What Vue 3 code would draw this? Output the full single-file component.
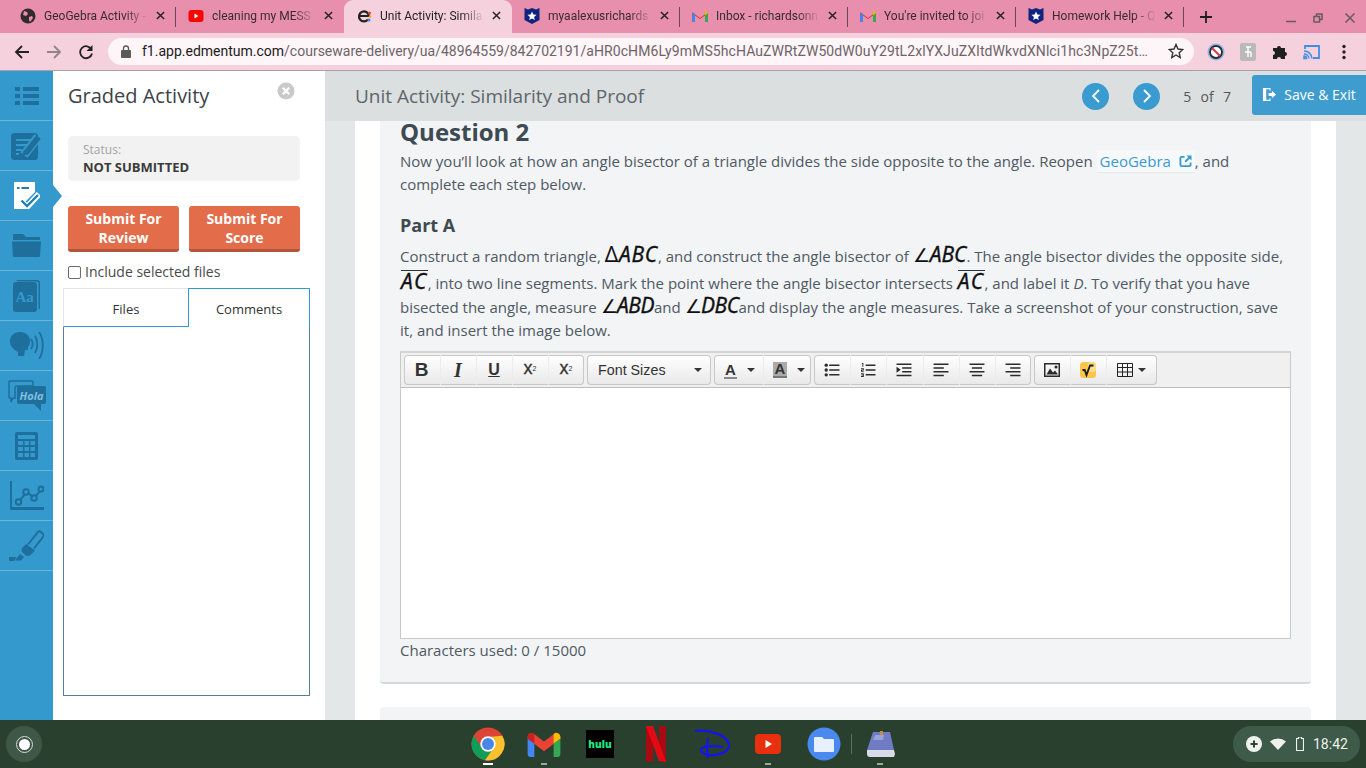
<template>
  <div class="screen">
    <!-- browser chrome -->
    <div class="tabstrip">
      <div
        v-for="tab in tabs"
        :key="tab.title"
        :class="['tab', { active: tab.active }]"
      >
        <svg class="fav" viewBox="0 0 16 16">
          <template v-if="tab.icon === 'globe'">
            <circle cx="8" cy="8" r="7.5" fill="#33292e" />
            <path d="M4 3l3 1 1 2-2 2-3-1zM9 9l3-1 1 2-3 4-1-2z" fill="#e78fac" />
          </template>
          <template v-else-if="tab.icon === 'yt'">
            <rect x="0.5" y="2" width="15" height="12" rx="3" fill="#f00" />
            <path d="M6.5 5.5l4 2.5-4 2.5z" fill="#fff" />
          </template>
          <template v-else-if="tab.icon === 'ed'">
            <path d="M12 11.500A5 5 0 1 1 13 8H4" fill="none" stroke="#222" stroke-width="2.200" />
            <circle cx="13.500" cy="5" r="1.500" fill="#e0483a" />
            <circle cx="14" cy="8.500" r="1.300" fill="#f0a020" />
            <circle cx="13" cy="12" r="1.500" fill="#3a8ae0" />
          </template>
          <template v-else-if="tab.icon === 'shield'">
            <path d="M0.500 0l3.500 1.500L8 0l4 1.500L15.500 0v12L8 16 .5 12z" fill="#12237e" />
            <path d="M8 3.500l1.300 3 3.200.3-2.400 2.100.7 3.100L8 10.400l-2.800 1.600.7-3.100-2.400-2.100 3.200-.3z" fill="#fff" />
          </template>
          <template v-else>
            <path d="M0 14V4l8 6 8-6v10h-3V7.500L8 11 3 7.500V14z" fill="#d93a2e" />
            <path d="M0 4.500l3 2.500v7H1a1 1 0 0 1-1-1z" fill="#4285f4" />
            <path d="M16 4.500L13 7v7h2a1 1 0 0 0 1-1z" fill="#34a853" />
            <path d="M13 3l3 1v1l-3 2.500z" fill="#f4b400" />
          </template>
        </svg>
        <span class="tab-title">{{ tab.title }}</span>
        <svg class="tab-x" viewBox="0 0 10 10"><path d="M1 1l8 8M9 1l-8 8" /></svg>
      </div>
      <svg class="newtab" viewBox="0 0 12 12"><path d="M6 0v12M0 6h12" /></svg>
      <div class="winctl">
        <svg viewBox="0 0 10 10"><path d="M0 8.500h10" /></svg>
        <svg viewBox="0 0 10 10"><path d="M1 3.500h5.500V9H1zM3.500 3.500V1H9v5.500H6.500" /></svg>
        <svg viewBox="0 0 10 10"><path d="M0.500 0.500l9 9M9.500 0.500l-9 9" /></svg>
      </div>
    </div>
    <div class="toolbar">
      <svg class="nav-ic" viewBox="0 0 16 16"><path d="M15 8H2M8 2L2 8l6 6" stroke="#222" /></svg>
      <svg class="nav-ic" viewBox="0 0 16 16"><path d="M1 8h13M8 2l6 6-6 6" stroke="#8f8589" /></svg>
      <svg class="nav-ic" viewBox="0 0 16 16"><path d="M13.500 5.500A6 6 0 1 0 14 9.500" stroke="#222" /><path d="M14.500 1v6h-6z" fill="#222" /></svg>
      <div class="omnibox">
        <svg class="lock" viewBox="0 0 10 13"><path d="M2.500 5V3.500a2.500 2.500 0 0 1 5 0V5" fill="none" stroke="#5a5a5a" stroke-width="1.300" /><rect y="5" width="10" height="8" rx="1" fill="#5a5a5a" /></svg>
        <span class="url"><b>f1.app.edmentum.com</b>/courseware-delivery/ua/48964559/842702191/<span class="b64">aHR0cHM6Ly9mMS5hcHAuZWRtZW50dW0uY29tL2xlYXJuZXItdWkvdXNlci1hc3NpZ25t…</span></span>
        <svg class="star" viewBox="0 0 16 16"><path d="M8 1.500l2 4.500 4.800.5-3.600 3.200 1 4.800L8 12l-4.200 2.500 1-4.800L1.200 6.500 6 6z" /></svg>
      </div>
      <div class="ext-row">
        <svg viewBox="0 0 18 18"><circle cx="9" cy="9" r="8.500" fill="#8ab8e8" /><circle cx="9" cy="9" r="6" fill="#fff" stroke="#2b2b2b" stroke-width="1.800" /><path d="M5 5l8 8" stroke="#d9384a" stroke-width="2" /></svg>
        <svg viewBox="0 0 18 18"><rect x="1" width="16" height="18" rx="2" fill="#b9b9b9" /><path d="M7 4h5M9 4v10M6 9h6M12 9v5" stroke="#fff" stroke-width="1.400" fill="none" /></svg>
        <svg viewBox="0 0 18 18"><path d="M2 5h4a2 2 0 1 1 4 0h4v4a2 2 0 1 1 0 4v3h-4a2 2 0 1 0-4 0H2v-4a2 2 0 1 0 0-4z" fill="#1f1f1f" /></svg>
        <svg viewBox="0 0 18 18"><path d="M2 6V3h14v12h-6" fill="none" stroke="#3f8fe8" stroke-width="1.800" /><path d="M1 15.500h2.500A2.500 2.500 0 0 0 1 13zM1 11a5 5 0 0 1 5 4.500M1 8a8 8 0 0 1 8 7.500" fill="none" stroke="#3f8fe8" stroke-width="1.500" /></svg>
        <svg viewBox="0 0 18 18"><circle cx="9" cy="3.500" r="1.700" fill="#222" /><circle cx="9" cy="9" r="1.700" fill="#222" /><circle cx="9" cy="14.500" r="1.700" fill="#222" /></svg>
      </div>
    </div>

    <!-- app -->
    <div class="app">
      <nav class="rail">
        <div v-for="(item, i) in railItems" :key="item" :class="['rail-item', { current: i === 2 }]">
          <svg v-if="item === 'list'" viewBox="0 0 24 18" class="ri list"><path d="M0 0h5v4H0zM8 0h16v4H8zM0 7h5v4H0zM8 7h16v4H8zM0 14h5v4H0zM8 14h16v4H8z" /></svg>
          <svg v-else-if="item === 'note'" viewBox="0 0 31 28" class="ri note">
            <rect y="1" width="27" height="27" rx="3.500" />
            <path d="M5 8h15M5 13h11M5 18h6M5 22h3" fill="none" stroke="#3499cd" stroke-width="2" />
            <path d="M13 23L27 5" fill="none" stroke="#3499cd" stroke-width="9" />
            <path d="M14.500 21.500L27.500 5" fill="none" stroke="#1f6f9c" stroke-width="5.500" />
            <path d="M11 24l1.500-5 4 3z" />
          </svg>
          <svg v-else-if="item === 'check'" viewBox="0 0 26 27" class="ri check"><path d="M0 0h21v10L10 21l4 6H0z" fill="#fff" /><path d="M7 19l6 6L25 12" fill="none" stroke="#fff" stroke-width="6" /><path d="M7.500 18.500l5.500 5.500 11-11" fill="none" stroke="#1f7fb5" stroke-width="2.400" /><path d="M3 5h2.500v2H3zM7.500 5H15v2H7.500z" fill="#1f7fb5" /></svg>
          <svg v-else-if="item === 'folder'" viewBox="0 0 29 23" class="ri folder"><path d="M1 1a1 1 0 0 1 1-1h9l3 3h13a1 1 0 0 1 1 1v2H1zM0 7.500h29L28 22a1 1 0 0 1-1 1H2a1 1 0 0 1-1-1z" /></svg>
          <svg v-else-if="item === 'dict'" viewBox="0 0 27 32" class="ri dict"><path d="M3 0h21a3 3 0 0 1 3 3v26h-1.500V3A1.500 1.500 0 0 0 24 1.500H5z" /><rect y="2" width="24" height="30" rx="3" /><text x="2.500" y="22" class="aa">Aa</text></svg>
          <svg v-else-if="item === 'speak'" viewBox="0 0 34 27" class="ri speak"><path d="M10 0c6 0 10 4 10 9 0 3-1 5-2 6v3h-3l-1 6H8v-4C4 18 0 14 0 9 0 4 4 0 10 0z" /><path d="M21 7c2 3 2 7 0 10M25 4c3 5 3 12 0 17M29 0c5 7 5 20 0 27" fill="none" stroke="#1f6f9c" stroke-width="1.800" /></svg>
          <svg v-else-if="item === 'hola'" viewBox="0 0 38 31" class="ri hola-ic"><path d="M2 1h22a1 1 0 0 1 1 1v4H9a2 2 0 0 0-2 2v10H5l-2 4v-4H2a1 1 0 0 1-1-1V2a1 1 0 0 1 1-1z" fill="none" stroke="#1f6f9c" stroke-width="1.500" /><path d="M11 6h25a2 2 0 0 1 2 2v14a2 2 0 0 1-2 2h-3v7l-7-7H11a2 2 0 0 1-2-2V8a2 2 0 0 1 2-2z" /><text x="11.500" y="20" class="hola">Hola</text></svg>
          <svg v-else-if="item === 'calc'" viewBox="0 0 23 28" class="ri calc"><path fill-rule="evenodd" d="M2 0h19a2 2 0 0 1 2 2v24a2 2 0 0 1-2 2H2a2 2 0 0 1-2-2V2a2 2 0 0 1 2-2zM3 3v4h17V3zM3 9v4h5V9zM9.500 9v4h4.500V9zM15.500 9v4H20V9zM3 15v4h5v-4zM9.500 15v4h4.500v-4zM15.500 15v4H20v-4zM3 21v4h5v-4zM9.500 21v4h4.500v-4zM15.500 21v4H20v-4z" /></svg>
          <svg v-else-if="item === 'chart'" viewBox="0 0 34 29" class="ri chart"><path d="M0 0h2v26h32v3H1a1 1 0 0 1-1-1z" /><path d="M10 19l5-6M18 12l5 4M26 15l4-5" stroke="#1f6f9c" stroke-width="2" /><g fill="none" stroke="#1f6f9c" stroke-width="2"><circle cx="8.500" cy="21" r="2.800" /><circle cx="16" cy="11" r="2.800" /><circle cx="24" cy="17" r="2.800" /><circle cx="31" cy="8" r="2.500" /></g></svg>
          <svg v-else viewBox="0 0 35 31" class="ri marker">
            <path d="M19 14.500L29 2a2 2 0 0 1 3 0l2 2a2 2 0 0 1 0 3L25 18.500" fill="none" stroke="#1f6f9c" stroke-width="2" />
            <path d="M17 14l9 6.500-5 5-3.500.5-4.500-4-.5-3z" />
            <path d="M11 24l4 3-3 3.500H6zM0 27h7.500L5 31H0z" />
          </svg>
        </div>
      </nav>

      <aside class="panel">
        <div class="panel-head">
          <h2>Graded Activity</h2>
          <svg class="panel-close" viewBox="0 0 18 18"><circle cx="9" cy="9" r="8.500" fill="#c9c9c9" /><path d="M5.800 5.800l6.400 6.400M12.200 5.800l-6.400 6.400" stroke="#fff" stroke-width="2.200" /></svg>
        </div>
        <div class="status">
          <span class="status-label">Status:</span>
          <strong>NOT SUBMITTED</strong>
        </div>
        <div class="submit-row">
          <button class="submit">Submit For Review</button>
          <button class="submit">Submit For Score</button>
        </div>
        <label class="include"><span class="box"></span>Include selected files</label>
        <div class="file-tabs">
          <div class="ft files">Files</div>
          <div class="ft comments">Comments</div>
        </div>
        <div class="tab-body"></div>
      </aside>

      <main class="main">
        <header class="topbar">
          <h1>Unit Activity: Similarity and Proof</h1>
          <div class="pager">
            <span class="round"><svg viewBox="0 0 12 16"><path d="M9 2L3 8l6 6" /></svg></span>
            <span class="round"><svg viewBox="0 0 12 16"><path d="M3 2l6 6-6 6" /></svg></span>
            <span class="count">5&nbsp; of&nbsp; 7</span>
          </div>
          <button class="save">
            <svg viewBox="0 0 16 16"><path d="M1 1h8v3H8V2.500H4.500v11H8V12h1v3H1z" /><path d="M7 6.500h3.500V4L15 8l-4.500 4V9.500H7z" /></svg>
            Save &amp; Exit
          </button>
        </header>
        <div class="scroll">
          <div class="sheet">
            <section class="card">
              <h3>Question 2</h3>
              <p class="intro">
                Now you’ll look at how an angle bisector of a triangle divides the side opposite to the angle. Reopen
                <a class="link">GeoGebra <svg viewBox="0 0 14 14"><path d="M6 1H3a2.500 2.500 0 0 0-2.500 2.500v7A2.500 2.500 0 0 0 3 13h8a2.500 2.500 0 0 0 2.500-2.500V8h-2v2.500a.5.5 0 0 1-.5.5H3a.5.5 0 0 1-.5-.5v-7A.5.5 0 0 1 3 3h3z" /><path d="M8 .500h5.500V6L11.500 4 7.500 8 6 6.500l4-4z" /></svg></a>, and complete each step below.
              </p>
              <h4>Part A</h4>
              <p class="task">
                Construct a random triangle, <span class="m wide"><i class="up">Δ</i>ABC</span>, and construct the angle bisector of <span class="m"><i class="up ang">∠</i>ABC</span>. The angle bisector divides the opposite side, <span class="m over">AC</span>, into two line segments. Mark the point where the angle bisector intersects <span class="m over">AC</span>, and label it <em>D</em>. To verify that you have bisected the angle, measure <span class="m tight"><i class="up ang">∠</i>ABD</span>and <span class="m tight"><i class="up ang">∠</i>DBC</span>and display the angle measures. Take a screenshot of your construction, save it, and insert the image below.
              </p>

              <div class="editor">
                <div class="ed-bar">
                  <div class="ed-group">
                    <span class="tb bold">B</span>
                    <span class="tb ital">I</span>
                    <span class="tb under">U</span>
                    <span class="tb scr">x<sup>2</sup></span>
                    <span class="tb scr">x<sub>2</sub></span>
                  </div>
                  <div class="ed-group">
                    <span class="tb sizes">Font Sizes<i class="caret"></i></span>
                  </div>
                  <div class="ed-group">
                    <span class="tb colorA"><u>A</u><i class="caret"></i></span>
                    <span class="tb colorB"><b>A</b><i class="caret"></i></span>
                  </div>
                  <div class="ed-group six">
                    <span class="tb">
                      <svg viewBox="0 0 16 15"><path d="M5 1.500h11v1.600H5zM5 6.700h11v1.600H5zM5 11.900h11v1.600H5z" /><circle cx="1.800" cy="2.300" r="1.800" /><circle cx="1.800" cy="7.500" r="1.800" /><circle cx="1.800" cy="12.700" r="1.800" /></svg>
                    </span>
                    <span class="tb">
                      <svg viewBox="0 0 16 15"><path d="M5.500 1.500H16v1.600H5.500zM5.500 6.700H16v1.600H5.500zM5.500 11.900H16v1.600H5.500zM1.500 0h1.500v4H2V1h-.5zM.5 5.500h3V8h-2v.5h2v1H.5V7h2v-.5h-2zM.5 11h3v4h-3v-1h2v-.5h-1.500v-.8h1.500V12h-2z" /></svg>
                    </span>
                    <span class="tb">
                      <svg viewBox="0 0 16 15"><path d="M0 .5h16v1.600H0zM6 4.500h10v1.600H6zM6 8.500h10v1.600H6zM0 12.500h16v1.600H0zM0 4l4.500 3.300L0 10.500z" /></svg>
                    </span>
                    <span class="tb">
                      <svg viewBox="0 0 16 15"><path d="M0 .5h16v1.600H0zM0 4.500h11v1.600H0zM0 8.500h16v1.600H0zM0 12.500h11v1.600H0z" /></svg>
                    </span>
                    <span class="tb">
                      <svg viewBox="0 0 16 15"><path d="M0 .5h16v1.600H0zM2.500 4.500h11v1.600h-11zM0 8.500h16v1.600H0zM2.500 12.500h11v1.600h-11z" /></svg>
                    </span>
                    <span class="tb">
                      <svg viewBox="0 0 16 15"><path d="M0 .5h16v1.600H0zM5 4.500h11v1.600H5zM0 8.500h16v1.600H0zM5 12.500h11v1.600H5z" /></svg>
                    </span>
                  </div>
                  <div class="ed-group">
                    <span class="tb">
                      <svg viewBox="0 0 16 14"><path fill-rule="evenodd" d="M0 0h16v14H0zM1.500 1.500v11h13v-11z" /><path d="M2.500 11.500l3.500-6 3 4 2-2 3 4z" /><circle cx="12" cy="4" r="1.500" /></svg>
                    </span>
                    <span class="tb">
                      <svg class="sq" viewBox="0 0 16 16"><rect width="16" height="16" rx="3.500" fill="#f9c649" /><rect x="8" width="8" height="10" rx="3" fill="#fbdc8c" /><path d="M2.500 8h2.200l1.800 5L10 3.500h3.500" fill="none" stroke="#1b1b1b" stroke-width="1.800" /></svg>
                    </span>
                    <span class="tb grid-tb">
                      <svg viewBox="0 0 16 14"><path d="M0.500 0.500h15v13H.5zM0 4.500h16M0 9h16M5.500 0v14M10.500 0v14" fill="none" stroke="#222" /></svg>
                      <i class="caret"></i>
                    </span>
                  </div>
                </div>
                <div class="ed-body"></div>
              </div>
              <p class="chars">Characters used: 0 / 15000</p>
            </section>
            <section class="card next"></section>
          </div>
        </div>
      </main>
    </div>

    <!-- chrome os shelf -->
    <footer class="shelf">
      <span class="launcher"><i></i></span>
      <div class="dock">
        <span class="app-ic running">
          <svg class="s34" viewBox="0 0 34 34"><circle cx="17" cy="17" r="16.500" fill="#db4437" /><path d="M2.700 8.750A16.500 16.500 0 0 0 14 33.200L23 20.500H11z" fill="#0f9d58" /><path d="M31.300 8.750A16.500 16.500 0 0 1 14 33.200L23 20.500 17 10z" fill="#fbc02d" /><circle cx="17" cy="17" r="7.700" fill="#fff" /><circle cx="17" cy="17" r="6" fill="#4a86e8" /></svg>
        </span>
        <span class="app-ic open">
          <svg class="gm" viewBox="0 0 34 27"><path d="M0 8V6a4 4 0 0 1 6.400-3.200L17 11 27.600 2.800A4 4 0 0 1 34 6v2L17 21z" fill="#ea4335" /><path d="M0 8V6a4 4 0 0 1 7-2.700v10z" fill="#c5221f" /><path d="M27 3.300A4 4 0 0 1 34 6v2l-7 5.300z" fill="#fbbc04" /><path d="M0 8l7 5.300V27H3a3 3 0 0 1-3-3z" fill="#4285f4" /><path d="M34 8l-7 5.300V27h4a3 3 0 0 0 3-3z" fill="#34a853" /></svg>
        </span>
        <span class="app-ic hulu"><b>hulu</b></span>
        <span class="app-ic">
          <svg class="nf" viewBox="0 0 20 36"><path d="M0 0h7v35l-7 1z" fill="#a80a12" /><path d="M13 0h7v36l-7-1z" fill="#a80a12" /><path d="M0 0h7l13 36-7-1z" fill="#e50914" /></svg>
        </span>
        <span class="app-ic">
          <svg class="dn" viewBox="0 0 36 31"><path d="M1 2C14 0 33 6 35 15c1 8-11 12-21 11C9 25 7 23 7 21c0-3 7-5 22-3M14 9c-1 6-1 14 0 20" fill="none" stroke="#1414f0" stroke-width="2.200" /></svg>
        </span>
        <span class="app-ic open">
          <svg class="yt" viewBox="0 0 26 20"><rect width="26" height="20" rx="4" fill="#e8300f" /><path d="M10.500 6l6.500 4-6.500 4z" fill="#fff" /></svg>
        </span>
        <span class="app-ic">
          <svg class="s34" viewBox="0 0 34 34"><circle cx="17" cy="17" r="16.500" fill="#4a89ee" /><path d="M8 10h7l2 2h9a1 1 0 0 1 1 1v11a1 1 0 0 1-1 1H8a1 1 0 0 1-1-1V11a1 1 0 0 1 1-1z" fill="#e8f0fe" /></svg>
        </span>
        <span class="dock-sep"></span>
        <span class="app-ic open">
          <svg class="bk" viewBox="0 0 29 26"><path d="M7 1h17l4 18H1z" fill="#6f7cc4" /><path d="M14 0h3v6l-1.500-1.500L14 6z" fill="#d08a3c" /><path d="M1 19h27l1 4-1 3H4a3 3 0 0 1-3-3z" fill="#d8dbe8" /><path d="M9 4h9l-1 5H7z" fill="#98a3dc" /></svg>
        </span>
      </div>
      <div class="tray">
        <svg viewBox="0 0 16 16"><circle cx="8" cy="8" r="8" fill="#eef1ee" /><path d="M8 4.500v7M4.500 8h7" stroke="#2b4434" stroke-width="2" /></svg>
        <svg viewBox="0 0 16 12" class="wifi"><path d="M0 3.500a12 12 0 0 1 16 0L8 12z" fill="#eef1ee" /></svg>
        <svg viewBox="0 0 8 14" class="batt"><path d="M2.500 0h3v1.500H7.500v12H.5v-12h2z" fill="none" stroke="#eef1ee" stroke-width="1.200" /></svg>
        <span class="clock">18:42</span>
      </div>
    </footer>
  </div>
</template>

<script setup>
const tabs = [
  { title: 'GeoGebra Activity -', icon: 'globe' },
  { title: 'cleaning my MESS', icon: 'yt' },
  { title: 'Unit Activity: Simila', icon: 'ed', active: true },
  { title: 'myaalexusrichards', icon: 'shield' },
  { title: 'Inbox - richardsonn', icon: 'gmail' },
  { title: "You're invited to joi", icon: 'gmail' },
  { title: 'Homework Help - Q', icon: 'shield' }
]

const railItems = ['list', 'note', 'check', 'folder', 'dict', 'speak', 'hola', 'calc', 'chart', 'marker']
</script>

<style>
html,
body {
  margin: 0;
  overflow: hidden;
}
</style>

<style scoped>
.screen {
  width: 1366px;
  height: 768px;
  display: flex;
  flex-direction: column;
  overflow: hidden;
  font-family: "Open Sans", sans-serif;
  color: #4c5660;
}

/* chrome */
.tabstrip {
  height: 33px;
  flex: none;
  background: #e78fac;
  display: flex;
  align-items: flex-end;
  padding-left: 8px;
  font-family: Roboto, sans-serif;
}
.tab {
  width: 168px;
  height: 33px;
  box-sizing: border-box;
  display: flex;
  align-items: center;
  padding: 0 11px 2px 12px;
  font-size: 12px;
  color: #3a2a30;
  position: relative;
}
.tab::after {
  content: "";
  position: absolute;
  right: 0;
  top: 7px;
  height: 20px;
  width: 1px;
  background: #6b4653;
}
.tab:nth-child(2)::after {
  display: none;
}
.tab.active {
  background: #f5d0dd;
  border-radius: 9px 9px 0 0;
  color: #222;
}
.tab.active::after {
  display: none;
}
.fav {
  width: 16px;
  height: 16px;
  flex: none;
  margin-right: 8px;
}
.tab-title {
  flex: 1;
  white-space: nowrap;
  overflow: hidden;
  -webkit-mask-image: linear-gradient(90deg, #000 78%, transparent 100%);
  mask-image: linear-gradient(90deg, #000 78%, transparent 100%);
}
.tab-x {
  width: 9px;
  height: 9px;
  flex: none;
  margin-left: 8px;
  fill: none;
  stroke: #222;
  stroke-width: 1.600;
}
.newtab {
  width: 12px;
  height: 12px;
  margin: 0 0 10px 16px;
  fill: none;
  stroke: #1f1f1f;
  stroke-width: 1.800;
}
.winctl {
  margin-left: auto;
  display: flex;
  padding: 0 11px 10px 0;
}
.winctl svg {
  width: 10px;
  height: 10px;
  fill: none;
  stroke: #6a5a60;
  stroke-width: 1.500;
}
.winctl svg:nth-child(2) {
  margin: 0 22px 0 17px;
}
.toolbar {
  height: 38px;
  flex: none;
  box-sizing: border-box;
  background: #f5d0dd;
  border-bottom: 1px solid #a9a1a4;
  display: flex;
  align-items: center;
  padding-left: 14px;
}
.nav-ic {
  width: 16px;
  height: 16px;
  margin-right: 16px;
  fill: none;
  stroke-width: 1.800;
}
.nav-ic:nth-child(3) {
  margin-right: 14px;
}
.omnibox {
  width: 1086px;
  height: 27px;
  flex: none;
  margin-top: -1px;
  border-radius: 14px;
  background: #fdf5f8;
  display: flex;
  align-items: center;
  padding-left: 13px;
  box-sizing: border-box;
  font-family: Roboto, sans-serif;
}
.lock {
  width: 10px;
  height: 13px;
  flex: none;
  margin-right: 11px;
}
.url {
  font-size: 14px;
  color: #6d6468;
  white-space: nowrap;
  width: 1006px;
  flex: none;
}
.url b {
  font-weight: 400;
  color: #201a1c;
}
.b64 {
  letter-spacing: 0.08px;
}
.star {
  width: 16px;
  height: 16px;
  flex: none;
  margin-left: 20px;
  fill: none;
  stroke: #333;
  stroke-width: 1.400;
}
.ext-row {
  display: flex;
  gap: 14px;
  margin-left: 13px;
}
.ext-row svg {
  width: 18px;
  height: 18px;
}

/* app layout */
.app {
  flex: 1;
  min-height: 0;
  display: flex;
}
.rail {
  width: 53px;
  flex: none;
  background: #3499cd;
  z-index: 2;
}
.rail-item {
  height: 50px;
  box-sizing: border-box;
  border-bottom: 1px solid #6cb2d9;
  display: flex;
  align-items: center;
  justify-content: center;
  position: relative;
}
.rail-item.current::after {
  content: "";
  position: absolute;
  left: 53px;
  top: 14px;
  border-left: 9px solid #3499cd;
  border-top: 11px solid transparent;
  border-bottom: 11px solid transparent;
}
.ri {
  fill: #1f6f9c;
}
.ri.list {
  width: 24px;
  height: 18px;
}
.ri.note {
  width: 31px;
  height: 28px;
}
.ri.check {
  width: 26px;
  height: 27px;
}
.ri.folder {
  width: 29px;
  height: 23px;
}
.ri.dict {
  width: 27px;
  height: 32px;
}
.ri.speak {
  width: 34px;
  height: 27px;
}
.ri.hola-ic {
  width: 38px;
  height: 31px;
}
.ri.calc {
  width: 23px;
  height: 28px;
}
.ri.chart {
  width: 34px;
  height: 29px;
}
.ri.marker {
  width: 35px;
  height: 31px;
}
.aa {
  font-family: "Liberation Serif", serif;
  font-weight: 700;
  font-size: 15px;
  fill: #3499cd;
}
.hola {
  font-family: "Open Sans", sans-serif;
  font-style: italic;
  font-weight: 700;
  font-size: 11px;
  fill: #7fbfe0;
}

/* panel */
.panel {
  width: 272px;
  flex: none;
  background: #fff;
  box-sizing: border-box;
  padding: 0 15px 24px 10px;
  display: flex;
  flex-direction: column;
}
.panel-head {
  display: flex;
  align-items: center;
  justify-content: space-between;
  height: 50px;
  padding: 0 15px 0 5px;
}
.panel-head h2 {
  margin: -2px 0 0;
  font-size: 20px;
  font-weight: 400;
  color: #3c4348;
}
.panel-close {
  width: 18px;
  height: 18px;
  margin: -10px 0 0 0;
}
.status {
  margin: 15px 10px 0 5px;
  height: 45px;
  box-sizing: border-box;
  padding: 5px 15px;
  border-radius: 5px;
  background: #f2f2f2;
  display: flex;
  flex-direction: column;
  font-size: 13px;
  line-height: 17px;
}
.status-label {
  color: #a3a3a3;
  font-size: 12px;
}
.status strong {
  color: #3a3a3a;
  margin-top: 1px;
}
.submit-row {
  display: flex;
  gap: 10px;
  margin: 25px 10px 0 5px;
}
.submit {
  flex: 1;
  height: 46px;
  border: 0;
  border-bottom: 3px solid #b1563a;
  border-radius: 3px;
  background: #e36c4a;
  color: #fff;
  font: 700 14px/19px "Open Sans", sans-serif;
  padding: 0 12px;
}
.include {
  display: flex;
  align-items: center;
  margin: 12px 0 0 5px;
  font-size: 14px;
  line-height: 16px;
  color: #4a4a4a;
}
.box {
  width: 11px;
  height: 11px;
  border: 1px solid #6b6b6b;
  border-radius: 2px;
  margin-right: 4px;
  background: #fff;
}
.file-tabs {
  display: flex;
  height: 39px;
  margin-top: 8px;
}
.ft {
  display: flex;
  align-items: center;
  justify-content: center;
  font-size: 13px;
  color: #333;
  box-sizing: border-box;
}
.files {
  width: 125px;
  border-top: 1px solid #e4e4e4;
  border-left: 1px solid #e4e4e4;
  border-bottom: 1px solid #3499cd;
  padding-top: 3px;
}
.comments {
  width: 122px;
  border: 1px solid #3499cd;
  border-bottom: 0;
  padding-top: 2px;
}
.tab-body {
  flex: 1;
  border: 1px solid #5a7f92;
  border-top: 0;
}

/* main */
.main {
  flex: 1;
  min-width: 0;
  display: flex;
  flex-direction: column;
  background: #e4e7e8;
}
.topbar {
  height: 50px;
  flex: none;
  background: #dcdfe0;
  display: flex;
  align-items: center;
  padding-left: 30px;
}
.topbar h1 {
  margin: 0;
  font-size: 19px;
  font-weight: 400;
  color: #5d666c;
  flex: 1;
}
.pager {
  display: flex;
  align-items: center;
  gap: 24px;
  margin-right: 21px;
}
.round {
  width: 27px;
  height: 27px;
  border-radius: 50%;
  background: #3a9bd0;
  display: flex;
  align-items: center;
  justify-content: center;
}
.round svg {
  width: 12px;
  height: 16px;
  fill: none;
  stroke: #fff;
  stroke-width: 1.800;
}
.count {
  font-size: 14px;
  color: #555;
  margin-left: -1px;
  word-spacing: 1px;
}
.save {
  width: 114px;
  height: 40px;
  margin-top: -2px;
  border: 0;
  border-radius: 3px 0 0 3px;
  background: #3f9ccf;
  color: #fff;
  display: flex;
  align-items: center;
  justify-content: center;
  gap: 7px;
  padding: 0 0 2px;
  font: 400 14px "Open Sans", sans-serif;
}
.save svg {
  width: 15px;
  height: 15px;
  fill: #fff;
}
.scroll {
  flex: 1;
  min-height: 0;
  overflow: hidden;
  padding: 0 30px;
}
.sheet {
  background: #fff;
  height: 100%;
  padding: 0 25px;
  box-sizing: border-box;
  overflow: hidden;
}
.card {
  background: #f2f4f6;
  padding: 0 20px 22px;
  border-radius: 0 0 4px 4px;
  border-bottom: 2px solid #d5d8da;
  font-size: 15px;
  color: #4f5962;
}
.card.next {
  margin-top: 23px;
  height: 40px;
  border-radius: 4px 4px 0 0;
}
h3 {
  margin: 0;
  font-size: 24px;
  line-height: 22px;
  font-weight: 700;
  color: #3e4a52;
}
.intro {
  margin: 7px 0 0;
  line-height: 23px;
}
.link {
  color: #3a9bd0;
  background: #f7f8f9;
  border-bottom: 1px solid #e6e8ea;
  padding: 1px 3px 1px 3px;
}
.link svg {
  width: 13px;
  height: 13px;
  margin-left: 4px;
  fill: #3a9bd0;
  vertical-align: -1px;
}
h4 {
  margin: 17px 0 0;
  font-size: 18px;
  line-height: 24px;
  font-weight: 700;
  color: #3e4a52;
}
.task {
  margin: 6px 0 0;
  line-height: 22.500px;
}
.m {
  font-family: "Noto Sans", sans-serif;
  font-style: italic;
  font-size: 21px;
  line-height: 23px;
  color: #111;
  -webkit-text-stroke: 0.3px #111;
}
.m.wide {
  letter-spacing: 0.75px;
}
.m.tight {
  letter-spacing: -0.5px;
}
.up {
  font-style: normal;
  -webkit-text-stroke: 0;
}
.ang {
  font-size: 19px;
}
.m.over {
  display: inline-block;
  margin: 2px 0 0 1px;
  border-top: 1px solid #333;
  letter-spacing: 1.500px;
  line-height: 21px;
}
.editor {
  margin-top: 10px;
  border: 1px solid #c9c9c9;
  border-top: 2px solid #d4d4d4;
  background: #fff;
}
.ed-bar {
  height: 35px;
  box-sizing: border-box;
  padding: 2px 3px 0;
  display: flex;
  gap: 3px;
  background: #f0f0f0;
  border-bottom: 1px solid #bdbdbd;
}
.ed-group {
  height: 30px;
  box-sizing: border-box;
  display: flex;
  box-shadow: inset 0 0 0 1px #c8c8c8;
  border-radius: 4px;
  background: linear-gradient(#fff, #e8e8e8);
}
.ed-group.six {
  width: 217px;
}
.ed-group.six .tb {
  flex: 1;
}
.tb {
  width: 36px;
  display: flex;
  align-items: center;
  justify-content: center;
  color: #333;
  font-family: "Liberation Sans", sans-serif;
  font-size: 14px;
}
.tb + .tb {
  box-shadow: inset 1px 0 0 #ececec;
}
.tb svg {
  width: 16px;
  height: 14px;
  fill: #2b2b2b;
}
.tb svg.sq {
  height: 16px;
}
.bold {
  font-size: 19px;
  font-weight: 700;
  padding-right: 1px;
  box-sizing: border-box;
}
.ital {
  font-family: "Liberation Serif", serif;
  font-size: 20px;
  font-weight: 700;
  font-style: italic;
}
.under {
  font-size: 16px;
  font-weight: 700;
  text-decoration: underline;
}
.scr {
  font-size: 18px;
  -webkit-text-stroke: 0.3px #333;
  padding-bottom: 3px;
  box-sizing: border-box;
}
.scr sup,
.scr sub {
  font-size: 7px;
  line-height: 0;
  -webkit-text-stroke: 0;
}
.sizes {
  width: 124px;
  justify-content: flex-start;
  padding-left: 11px;
  box-sizing: border-box;
  font-size: 14.300px;
}
.caret {
  border-top: 4px solid #333;
  border-left: 4px solid transparent;
  border-right: 4px solid transparent;
  margin-left: 6px;
}
.sizes .caret {
  margin-left: auto;
  margin-right: 9px;
}
.colorA,
.colorB {
  width: 48.500px;
  font-size: 15px;
  justify-content: flex-start;
  padding-left: 10px;
  box-sizing: border-box;
}
.colorA .caret,
.colorB .caret {
  margin-left: 10px;
}
.colorA u {
  font-weight: 700;
  text-decoration: none;
  border-bottom: 2px solid #888;
  padding: 0 1px;
  line-height: 15px;
}
.colorB b {
  background: #aaa;
  border-bottom: 2px solid #777;
  padding: 0 2px;
  line-height: 14px;
}
.grid-tb {
  width: 51px;
}
.grid-tb .caret {
  margin-left: 5px;
}
.ed-body {
  height: 250px;
}
.chars {
  margin: 1px 0 0;
  line-height: 20px;
  font-size: 15px;
}

/* shelf */
.shelf {
  height: 48px;
  flex: none;
  background: #29402f;
  display: flex;
  align-items: center;
  position: relative;
}
.launcher {
  width: 36px;
  height: 36px;
  margin-left: 6px;
  border-radius: 50%;
  background: #3e5747;
  display: flex;
  align-items: center;
  justify-content: center;
}
.launcher i {
  width: 11px;
  height: 11px;
  border: 1px solid #d6ddd8;
  border-radius: 50%;
  background: #fff;
  background-clip: content-box;
  padding: 2px;
}
.dock {
  display: flex;
  align-items: center;
  margin-left: 418px;
}
.app-ic {
  width: 56px;
  height: 48px;
  display: flex;
  align-items: center;
  justify-content: center;
  position: relative;
}
.s34 {
  width: 34px;
  height: 34px;
}
.gm {
  width: 34px;
  height: 26px;
}
.nf {
  width: 20px;
  height: 36px;
}
.dn {
  width: 36px;
  height: 31px;
}
.yt {
  width: 26px;
  height: 20px;
}
.bk {
  width: 29px;
  height: 26px;
}
.app-ic.open::after,
.app-ic.running::after {
  content: "";
  position: absolute;
  bottom: 3px;
  left: 50%;
  width: 6px;
  height: 2px;
  margin-left: -3px;
  background: #9aa8a0;
}
.app-ic.running::after {
  width: 10px;
  margin-left: -5px;
  background: #fff;
}
.hulu b {
  width: 28px;
  height: 28px;
  background: #000;
  color: #1ce783;
  font-size: 10px;
  font-weight: 800;
  display: flex;
  align-items: center;
  justify-content: center;
  font-family: "Open Sans", sans-serif;
}
.dock-sep {
  width: 1px;
  height: 20px;
  background: #5b6e61;
  margin-left: -1px;
}
.tray {
  margin-left: auto;
  margin-right: 6px;
  height: 36px;
  width: 127px;
  box-sizing: border-box;
  border-radius: 18px;
  background: #3e5a48;
  display: flex;
  align-items: center;
  gap: 8px;
  padding-left: 13px;
  color: #eef1ee;
  font-family: Roboto, sans-serif;
  font-size: 14px;
}
.tray svg {
  width: 16px;
  height: 16px;
}
.tray .wifi {
  height: 12px;
}
.tray .batt {
  width: 8px;
  height: 14px;
  margin-left: 2px;
}
.clock {
  margin-left: 1px;
}
</style>
